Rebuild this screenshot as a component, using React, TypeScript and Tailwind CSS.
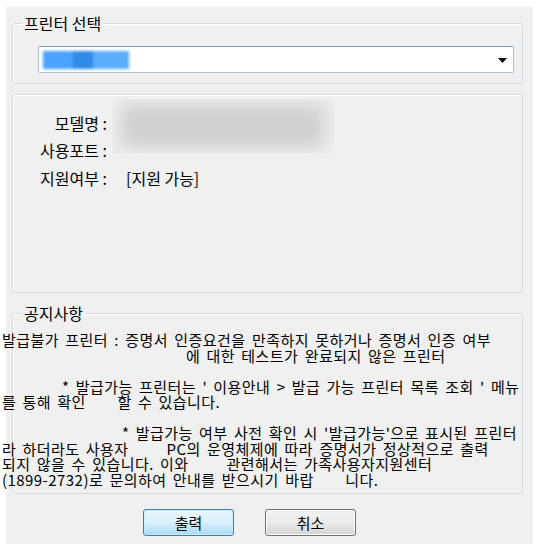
import React from "react";

const font = { fontFamily: '"Noto Sans CJK KR", "Noto Sans", sans-serif' };

function GroupLegend({ text }: { text: string }) {
  return (
    <span className="absolute left-[9px] top-[-10px] px-[2px] bg-[#f0f0f0] text-[16px] leading-[19px] text-black">
      {text}
    </span>
  );
}

function NoticeLine({ children, indent = 0 }: { children: React.ReactNode; indent?: number }) {
  return (
    <div className="whitespace-pre h-[15.5px] leading-[15.5px]" style={{ paddingLeft: indent }}>
      {children}
    </div>
  );
}

export default function App() {
  return (
    <div className="w-[540px] h-[553px] bg-white pt-[7px] pl-[6px]" style={font}>
      <div className="w-[527px] h-[537px] bg-[#f0f0f0] flex flex-col text-black">
        {/* 프린터 선택 */}
        <div className="relative mt-[16px] ml-[6px] w-[511px] h-[61px] border border-[#d5dbe0] rounded-[3px] shadow-[inset_1px_1px_0_#ffffff] pt-[22px] pl-[25px]">
          <GroupLegend text="프린터 선택" />
          <div className="relative w-[476px] h-[27px] bg-white border border-[#abc0d4] border-t-[#7f9db9] rounded-[2px] flex items-center">
            <div className="ml-[4px] w-[86px] h-[18px] bg-[#3d97f5] blur-[1.5px] flex">
              <div className="w-[30px] h-full bg-[#4aa3ff]" />
              <div className="w-[20px] h-full bg-[#2f8ae8]" />
              <div className="w-[36px] h-full bg-[#5aaefc]" />
            </div>
            <svg className="absolute right-[6px] top-[11px]" width="9" height="5" viewBox="0 0 9 5">
              <polygon points="0,0 9,0 4.5,5" fill="#000" />
            </svg>
          </div>
        </div>

        {/* info */}
        <div className="relative mt-[10px] ml-[6px] w-[511px] h-[199px] border border-[#d5dbe0] rounded-[2px] shadow-[inset_1px_1px_0_#ffffff] pt-[14px] text-[16px]">
          <div className="absolute left-[99px] top-[4px] w-[222px] h-[54px] overflow-hidden">
            <div className="absolute left-[8px] top-[5px] w-[205px] h-[44px] bg-[#cfcfcf] blur-[9px]" />
          </div>
          <div className="relative flex flex-col">
            <div className="h-[27px] flex items-center">
              <span className="w-[94px] text-right">모델명 :</span>
            </div>
            <div className="h-[27px] flex items-center">
              <span className="w-[94px] text-right">사용포트 :</span>
            </div>
            <div className="h-[29px] flex items-center">
              <span className="w-[94px] text-right">지원여부 :</span>
              <span className="ml-[19px]">[지원 가능]</span>
            </div>
          </div>
        </div>

        {/* 공지사항 */}
        <div className="relative mt-[20px] ml-[6px] w-[511px] h-[181px] border border-[#d5dbe0] rounded-[3px] shadow-[inset_1px_1px_0_#ffffff] pt-[18px]">
          <GroupLegend text="공지사항" />
          <div className="ml-[-11px] text-[15px] tracking-[0.45px] [word-spacing:2.5px]">
            <NoticeLine>발급불가 프린터 : 증명서 인증요건을 만족하지 못하거나 증명서 인증 여부</NoticeLine>
            <NoticeLine indent={184}>에 대한 테스트가 완료되지 않은 프린터</NoticeLine>
            <NoticeLine> </NoticeLine>
            <NoticeLine indent={60}>* 발급가능 프린터는 ' 이용안내 &gt; 발급 가능 프린터 목록 조회 ' 메뉴</NoticeLine>
            <NoticeLine>를 통해 확인     할 수 있습니다.</NoticeLine>
            <NoticeLine> </NoticeLine>
            <NoticeLine indent={120}>* 발급가능 여부 사전 확인 시 '발급가능'으로 표시된 프린터</NoticeLine>
            <NoticeLine>라 하더라도 사용자      PC의 운영체제에 따라 증명서가 정상적으로 출력</NoticeLine>
            <NoticeLine>되지 않을 수 있습니다. 이와      관련해서는 가족사용자지원센터</NoticeLine>
            <NoticeLine>(1899-2732)로 문의하여 안내를 받으시기 바랍     니다.</NoticeLine>
          </div>
        </div>

        {/* buttons */}
        <div className="mt-[15px] pl-[137px] flex gap-[31px]">
          <button className="w-[91px] h-[27px] rounded-[3px] border border-[#3c7fb1] bg-gradient-to-b from-[#eaf6fd] via-[#d9f0fc] to-[#a7d9f5] shadow-[inset_0_0_0_1px_#c8eefd] text-[15px] leading-none text-black">
            출력
          </button>
          <button className="w-[91px] h-[27px] rounded-[3px] border border-[#707070] bg-gradient-to-b from-[#f2f2f2] via-[#ebebeb] to-[#d4d4d4] shadow-[inset_0_0_0_1px_#fcfcfc] text-[15px] leading-none text-black">
            취소
          </button>
        </div>
      </div>
    </div>
  );
}
